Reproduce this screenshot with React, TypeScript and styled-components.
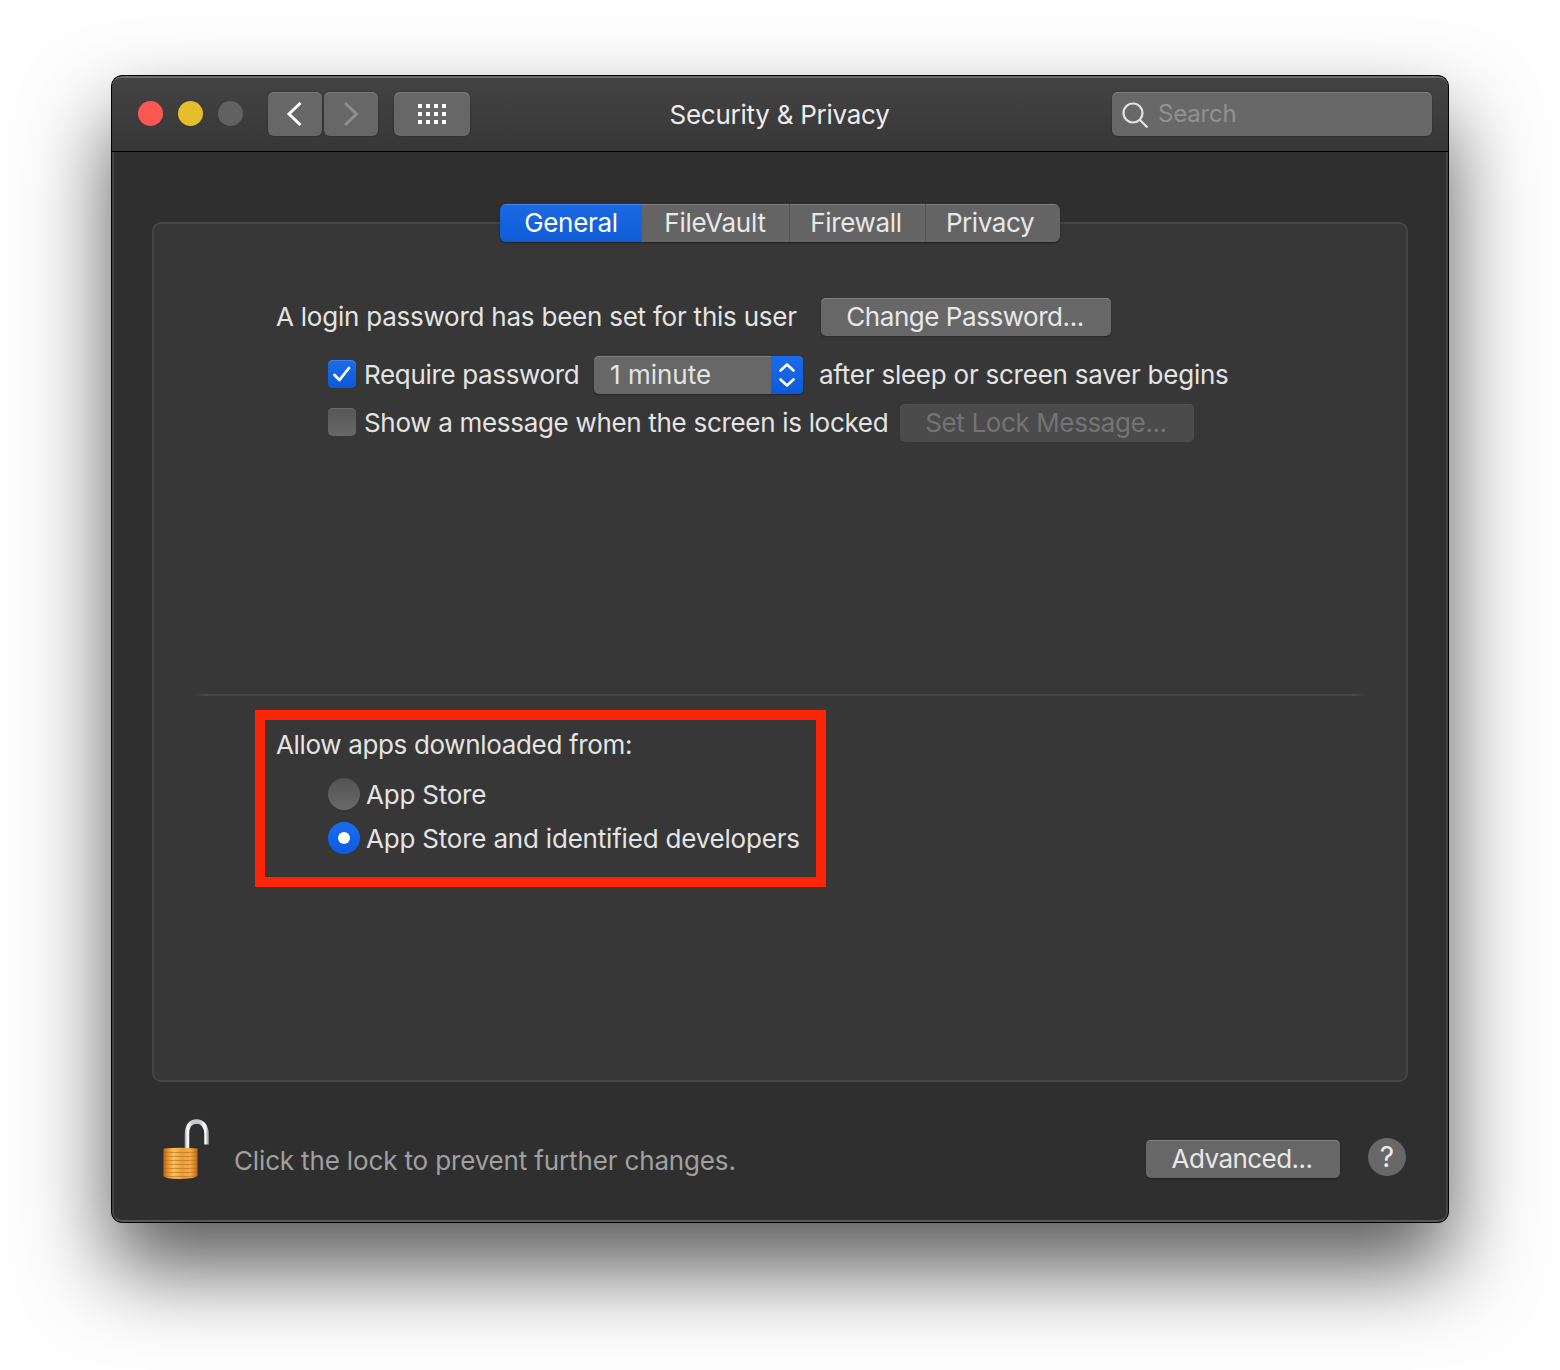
import styled, { createGlobalStyle, css } from "styled-components";

const GlobalStyle = createGlobalStyle`
  * {
    box-sizing: border-box;
  }

  body {
    margin: 0;
    background: #fefefe;
    font-family: Inter, "Liberation Sans", sans-serif;
    font-size: 26px;
    line-height: 32px;
    color: #e4e4e4;
    overflow: hidden;
  }
`;

const Desktop = styled.div`
  width: 1560px;
  height: 1370px;
  padding: 75px 111px 0;
`;

const Window = styled.div`
  display: flex;
  flex-direction: column;
  height: 1148px;
  border: 1px solid #000;
  border-radius: 11px;
  background: #2f2f2f;
  overflow: hidden;
  box-shadow: 0 45px 86px rgba(0, 0, 0, 0.65);
`;

const WindowFrame = styled.div`
  display: flex;
  flex-direction: column;
  flex: 1;
  border: 2px solid #424242;
  border-top: none;
  border-bottom-color: #585858;
  border-radius: 0 0 10px 10px;
`;

const TitleBar = styled.header`
  display: grid;
  grid-template-columns: 1fr auto 1fr;
  align-items: center;
  height: 76px;
  margin: 0 -2px;
  padding: 0 16px 2px;
  border-top: 2px solid #6b6b6b;
  border-bottom: 1px solid #000;
  border-radius: 10px 10px 0 0;
  background: linear-gradient(#434343, #373737);
`;

const TitleLeft = styled.div`
  display: flex;
  align-items: center;
  padding-left: 10px;
`;

const TrafficLight = styled.span<{ color: string }>`
  width: 25px;
  height: 25px;
  margin-right: 15px;
  border-radius: 50%;
  background: ${({ color }) => color};
`;

const ToolButton = styled.button<{ width: number; gap: number }>`
  display: flex;
  align-items: center;
  justify-content: center;
  width: ${({ width }) => width}px;
  height: 44px;
  margin: 0 0 0 ${({ gap }) => gap}px;
  padding: 0;
  border: none;
  border-radius: 6px;
  background: #676767;
  box-shadow: inset 0 1px #7c7c7c, 0 0 2px rgba(0, 0, 0, 0.4);
`;

const Title = styled.h1`
  margin: 0;
  padding: 2px 1px 0 0;
  font-size: 26px;
  font-weight: 400;
  color: #ececec;
  letter-spacing: -0.26px;
`;

const SearchBox = styled.div`
  display: flex;
  align-items: center;
  justify-self: end;
  gap: 8px;
  width: 320px;
  height: 44px;
  padding-left: 8px;
  border-radius: 6px;
  background: #686868;
  box-shadow: inset 0 1px #808080, 0 0 2px rgba(0, 0, 0, 0.4);
  font-size: 24px;
  color: #919191;
`;

const Content = styled.main`
  display: flex;
  flex-direction: column;
  flex: 1;
  padding: 52px 38px 0;
`;

const Tabs = styled.div`
  position: relative;
  z-index: 1;
  display: flex;
  align-self: center;
  width: 560px;
  height: 38px;
  border-radius: 6px;
  overflow: hidden;
  box-shadow: 0 1px 2px rgba(0, 0, 0, 0.4);
`;

const Tab = styled.button<{ width: number; inset?: number; active?: boolean }>`
  width: ${({ width }) => width}px;
  padding: 0 ${({ inset = 0 }) => inset}px 0 0;
  border: none;
  border-left: 1px solid #545454;
  background: #646464;
  box-shadow: inset 0 1px #7d7d7d;
  font: inherit;
  color: #e8e8e8;

  ${({ active }) =>
    active &&
    css`
      border-left: none;
      background: linear-gradient(#1a6ae4, #0f5cd6);
      box-shadow: inset 0 1px #4586e8;
      color: #fff;

      & + button {
        border-left: none;
      }
    `}
`;

const GroupBox = styled.section`
  display: flex;
  flex-direction: column;
  height: 860px;
  margin-top: -20px;
  padding: 74px 40px 0;
  border: 2px solid #454545;
  border-radius: 9px;
  background: #373737;
`;

const Row = styled.div<{ indent: number; bottom: number }>`
  display: flex;
  align-items: center;
  height: 38px;
  margin: 0 0 ${({ bottom }) => bottom}px ${({ indent }) => indent}px;
`;

const Text = styled.span<{ width?: number; spacing?: number; muted?: boolean }>`
  flex: none;
  width: ${({ width }) => (width ? `${width}px` : "auto")};
  letter-spacing: ${({ spacing = 0 }) => spacing}px;
  white-space: nowrap;
  color: ${({ muted }) => (muted ? "#a0a0a0" : "inherit")};
`;

const PushButton = styled.button<{ width: number }>`
  flex: none;
  width: ${({ width }) => width}px;
  height: 38px;
  padding: 0 2px 0 0;
  border: none;
  border-radius: 5px;
  background: #676767;
  box-shadow: inset 0 1px #808080, 0 1px 2px rgba(0, 0, 0, 0.35);
  font: inherit;
  color: #e8e8e8;

  &:disabled {
    background: #4b4b4b;
    box-shadow: inset 0 1px #525252;
    color: #747474;
  }
`;

const Checkbox = styled.span<{ checked?: boolean }>`
  display: flex;
  align-items: center;
  justify-content: center;
  flex: none;
  width: 28px;
  height: 28px;
  margin: -2px 8px 0 0;
  border-radius: 5px;
  background: ${({ checked }) =>
    checked ? "linear-gradient(#1a6cec, #0d5ad9)" : "linear-gradient(#565656, #686868)"};
  box-shadow: inset 0 1px ${({ checked }) => (checked ? "#3d80ea" : "#6a6a6a")};
`;

const PopUp = styled.div`
  display: flex;
  align-items: center;
  justify-content: space-between;
  width: 209px;
  height: 38px;
  margin-right: 16px;
  padding-left: 16px;
  border-radius: 5px;
  background: #676767;
  box-shadow: inset 0 1px #808080, 0 1px 2px rgba(0, 0, 0, 0.35);
  overflow: hidden;
`;

const PopUpArrows = styled.span`
  display: flex;
  align-items: center;
  justify-content: center;
  width: 32px;
  height: 38px;
  background: linear-gradient(#1a6cec, #0d5ad9);
`;

const Divider = styled.hr`
  width: 1172px;
  height: 2px;
  margin: 252px 0 0;
  border: none;
  background: linear-gradient(90deg, #373737, #474747 10px, #474747 1162px, #373737);
`;

const Highlight = styled.div`
  width: 571px;
  height: 177px;
  margin: 14px 0 0 61px;
  padding: 9px 0 0 11px;
  border: 10px solid #fd2408;
`;

const RadioRow = styled.div<{ top: number }>`
  display: flex;
  align-items: flex-start;
  height: 32px;
  margin: ${({ top }) => top}px 0 0 52px;
  line-height: 34px;
`;

const Radio = styled.span<{ checked?: boolean }>`
  display: flex;
  align-items: center;
  justify-content: center;
  flex: none;
  width: 32px;
  height: 32px;
  margin-right: 6px;
  border-radius: 50%;
  background: ${({ checked }) =>
    checked ? "linear-gradient(#1a6cf0, #0d5ce0)" : "linear-gradient(#525252, #6a6a6a)"};

  &::after {
    content: "";
    width: 12px;
    height: 12px;
    border-radius: 50%;
    background: ${({ checked }) => (checked ? "#fff" : "transparent")};
  }
`;

const Footer = styled.footer`
  display: flex;
  align-items: flex-start;
  padding: 37px 2px 0 10px;
`;

const LockNote = styled.div`
  flex: 1;
  padding: 26px 0 0 25px;
`;

const FooterActions = styled.div`
  display: flex;
  gap: 28px;
  padding-top: 21px;
`;

const HelpButton = styled.button`
  width: 38px;
  height: 38px;
  margin-top: -2px;
  padding: 0;
  border: none;
  border-radius: 50%;
  background: #686868;
  font: inherit;
  font-size: 28px;
  color: #ececec;
`;

const GridIcon = () => (
  <svg width="30" height="22" viewBox="0 0 30 22" fill="#fff">
    {[0, 8, 16].map((y) =>
      [0, 8, 16, 24].map((x) => <rect key={`${x}-${y}`} x={x + 1} y={y + 1} width="4" height="4" />)
    )}
  </svg>
);

const LockIcon = () => (
  <svg width="47" height="64" viewBox="0 0 47 64">
    <defs>
      <linearGradient id="brass" x1="0" x2="1" y1="0" y2="0">
        <stop offset="0" stopColor="#b8620f" />
        <stop offset="0.1" stopColor="#e08c28" />
        <stop offset="0.3" stopColor="#fbbf5c" />
        <stop offset="0.55" stopColor="#e8a03c" />
        <stop offset="0.8" stopColor="#f3ad48" />
        <stop offset="1" stopColor="#c06c14" />
      </linearGradient>
      <linearGradient id="steel" x1="23" x2="46" y1="0" y2="0" gradientUnits="userSpaceOnUse">
        <stop offset="0" stopColor="#a9adb3" />
        <stop offset="0.12" stopColor="#fff" />
        <stop offset="0.3" stopColor="#c5c8cb" />
        <stop offset="0.65" stopColor="#c5c8cb" />
        <stop offset="0.88" stopColor="#fff" />
        <stop offset="1" stopColor="#a5a8ac" />
      </linearGradient>
    </defs>
    <path
      d="M25 31V15C25 7 29 2.500 34.500 2.500S44.500 7 44.500 15V25.500"
      fill="none"
      stroke="url(#steel)"
      strokeWidth="4.500"
    />
    <path d="M1.500 29.500Q18 28 35.500 29.500V56.500Q34 59.500 18 60Q3 60 1.500 57Z" fill="url(#brass)" />
    <g stroke="#a4560c" strokeOpacity="0.45" strokeWidth="1.200" fill="none">
      {[33, 37, 41, 45, 49, 53, 57].map((y) => (
        <path key={y} d={`M1.500 ${y}Q18 ${y + 1} 35.500 ${y}`} />
      ))}
    </g>
  </svg>
);

const App = () => (
  <>
    <GlobalStyle />
    <Desktop>
      <Window>
        <WindowFrame>
          <TitleBar>
            <TitleLeft>
              <TrafficLight color="#fc5753" />
              <TrafficLight color="#e5bf2b" />
              <TrafficLight color="#616161" />
              <ToolButton width={54} gap={10} aria-label="Back">
                <svg width="18" height="28" viewBox="0 0 18 28" fill="none" stroke="#fff" strokeWidth="3">
                  <path d="M14.500 3L3 14L14.500 25" />
                </svg>
              </ToolButton>
              <ToolButton width={54} gap={2} aria-label="Forward">
                <svg width="18" height="28" viewBox="0 0 18 28" fill="none" stroke="#8f8f8f" strokeWidth="3">
                  <path d="M3 3L14.500 14L3 25" />
                </svg>
              </ToolButton>
              <ToolButton width={76} gap={16} aria-label="Show all">
                <GridIcon />
              </ToolButton>
            </TitleLeft>
            <Title>Security &amp; Privacy</Title>
            <SearchBox>
              <svg width="30" height="30" viewBox="0 0 30 30" fill="none" stroke="#e4e4e4" strokeWidth="2.200">
                <circle cx="13" cy="14" r="9.500" />
                <path d="M20 21L27.500 28.500" />
              </svg>
              <Text spacing={-0.2}>Search</Text>
            </SearchBox>
          </TitleBar>
          <Content>
            <Tabs>
              <Tab width={142} active>
                <Text spacing={-0.3}>General</Text>
              </Tab>
              <Tab width={147} inset={1}>
                <Text spacing={-0.24}>FileVault</Text>
              </Tab>
              <Tab width={136} inset={3}>
                <Text spacing={-0.34}>Firewall</Text>
              </Tab>
              <Tab width={135} inset={6}>
                <Text spacing={-0.42}>Privacy</Text>
              </Tab>
            </Tabs>
            <GroupBox>
              <Row indent={82} bottom={20}>
                <Text width={545} spacing={-0.23}>
                  A login password has been set for this user
                </Text>
                <PushButton width={290}>
                  <Text spacing={-0.45}>Change Password...</Text>
                </PushButton>
              </Row>
              <Row indent={134} bottom={10}>
                <Checkbox checked>
                  <svg
                    width="22"
                    height="22"
                    viewBox="0 0 22 22"
                    fill="none"
                    stroke="#fff"
                    strokeWidth="2.800"
                    strokeLinecap="round"
                    strokeLinejoin="round"
                  >
                    <path d="M3.500 12L8.500 17L18 5" />
                  </svg>
                </Checkbox>
                <Text width={230} spacing={-0.34}>
                  Require password
                </Text>
                <PopUp>
                  <Text>1 minute</Text>
                  <PopUpArrows>
                    <svg
                      width="18"
                      height="26"
                      viewBox="0 0 18 26"
                      fill="none"
                      stroke="#fff"
                      strokeWidth="2.600"
                      strokeLinecap="round"
                      strokeLinejoin="round"
                    >
                      <path d="M2.500 8.500L9 2.500L15.500 8.500M2.500 17.500L9 23.500L15.500 17.500" />
                    </svg>
                  </PopUpArrows>
                </PopUp>
                <Text spacing={-0.24}>after sleep or screen saver begins</Text>
              </Row>
              <Row indent={134} bottom={0}>
                <Checkbox />
                <Text width={536} spacing={-0.31}>
                  Show a message when the screen is locked
                </Text>
                <PushButton width={294} disabled>
                  <Text spacing={-0.38}>Set Lock Message...</Text>
                </PushButton>
              </Row>
              <Divider />
              <Highlight>
                <Text spacing={-0.34}>Allow apps downloaded from:</Text>
                <RadioRow top={17}>
                  <Radio />
                  <Text spacing={-0.22}>App Store</Text>
                </RadioRow>
                <RadioRow top={12}>
                  <Radio checked />
                  <Text spacing={-0.2}>App Store and identified developers</Text>
                </RadioRow>
              </Highlight>
            </GroupBox>
            <Footer>
              <LockIcon />
              <LockNote>
                <Text spacing={-0.15} muted>
                  Click the lock to prevent further changes.
                </Text>
              </LockNote>
              <FooterActions>
                <PushButton width={194}>
                  <Text spacing={-0.55}>Advanced...</Text>
                </PushButton>
                <HelpButton>?</HelpButton>
              </FooterActions>
            </Footer>
          </Content>
        </WindowFrame>
      </Window>
    </Desktop>
  </>
);

export default App;
